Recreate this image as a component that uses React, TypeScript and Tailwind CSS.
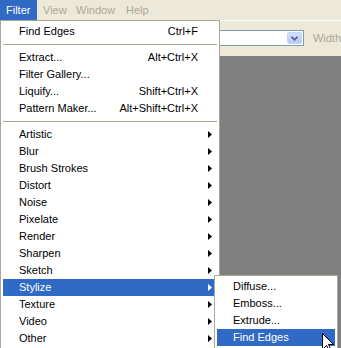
import React from "react";

type Item =
  | { kind: "item"; label: string; shortcut?: string; sub?: boolean; active?: boolean }
  | { kind: "sep" };

const mainItems: Item[] = [
  { kind: "item", label: "Find Edges", shortcut: "Ctrl+F" },
  { kind: "sep" },
  { kind: "item", label: "Extract...", shortcut: "Alt+Ctrl+X" },
  { kind: "item", label: "Filter Gallery..." },
  { kind: "item", label: "Liquify...", shortcut: "Shift+Ctrl+X" },
  { kind: "item", label: "Pattern Maker...", shortcut: "Alt+Shift+Ctrl+X" },
  { kind: "sep" },
  { kind: "item", label: "Artistic", sub: true },
  { kind: "item", label: "Blur", sub: true },
  { kind: "item", label: "Brush Strokes", sub: true },
  { kind: "item", label: "Distort", sub: true },
  { kind: "item", label: "Noise", sub: true },
  { kind: "item", label: "Pixelate", sub: true },
  { kind: "item", label: "Render", sub: true },
  { kind: "item", label: "Sharpen", sub: true },
  { kind: "item", label: "Sketch", sub: true },
  { kind: "item", label: "Stylize", sub: true, active: true },
  { kind: "item", label: "Texture", sub: true },
  { kind: "item", label: "Video", sub: true },
  { kind: "item", label: "Other", sub: true },
];

const subItems = [
  { label: "Diffuse..." },
  { label: "Emboss..." },
  { label: "Extrude..." },
  { label: "Find Edges", active: true },
];

function Arrow({ white }: { white?: boolean }) {
  return (
    <svg width="4" height="7" viewBox="0 0 4 7" className="block">
      <polygon points="0,0 4,3.5 0,7" fill={white ? "#ffffff" : "#000000"} />
    </svg>
  );
}

export default function App() {
  return (
    <div
      className="relative w-[341px] h-[348px] overflow-hidden bg-[#808080] text-[11px] leading-none"
      style={{ fontFamily: '"Liberation Sans", Arial, sans-serif' }}
    >
      {/* Menu bar */}
      <div className="flex h-[20px] bg-[#ece9d8] text-[#aca899]">
        <div className="flex w-[37px] items-center bg-[#316ac5] pl-[6px] text-white">Filter</div>
        <div className="flex w-[33px] items-center pl-[6px]">View</div>
        <div className="flex w-[50px] items-center pl-[6px]">Window</div>
        <div className="flex items-center pl-[6px]">Help</div>
      </div>
      <div className="h-px bg-white" />
      {/* Options toolbar */}
      <div className="flex h-[35px] items-start bg-[#ece9d8] pl-[150px] pt-[9px]">
        <div className="flex h-[16px] w-[156px] items-center justify-end border border-[#7f9db9] bg-white pr-px">
          <div className="flex h-[12px] w-[15px] items-center justify-center rounded-[2px] border border-[#c3d3fd] bg-gradient-to-b from-[#d4e1fd] to-[#b3c8f5]">
            <svg width="7" height="5" viewBox="0 0 7 5">
              <polyline points="0.5,0.8 3.5,3.8 6.5,0.8" fill="none" stroke="#4d6185" strokeWidth="1.8" />
            </svg>
          </div>
        </div>
        <div className="ml-[9px] flex h-[16px] items-center text-[#aca899]">Width</div>
      </div>

      {/* Filter menu */}
      <div className="absolute left-0 top-[20px] w-[220px] border border-[#aca899] bg-white p-[2px] text-black">
        {mainItems.map((it, i) =>
          it.kind === "sep" ? (
            <div key={i} className="flex h-[9px] items-center">
              <div className="h-px w-full bg-[#aca899]" />
            </div>
          ) : (
            <div
              key={i}
              className={`flex h-[17px] items-center pl-[16px] ${it.active ? "bg-[#316ac5] text-white" : ""}`}
            >
              <span className="flex-1 whitespace-nowrap">{it.label}</span>
              {it.shortcut && <span className="pr-[19px] whitespace-nowrap">{it.shortcut}</span>}
              {it.sub && (
                <span className="pr-[5px]">
                  <Arrow white={it.active} />
                </span>
              )}
            </div>
          )
        )}
      </div>

      {/* Stylize submenu */}
      <div className="absolute left-[214px] top-[275px] w-[124px] border border-[#aca899] bg-white p-[2px] text-black">
        {subItems.map((it, i) => (
          <div
            key={i}
            className={`flex h-[17px] items-center pl-[16px] whitespace-nowrap ${it.active ? "bg-[#316ac5] text-white" : ""}`}
          >
            {it.label}
          </div>
        ))}
      </div>

      {/* Mouse cursor */}
      <svg className="absolute left-[322px] top-[333px]" width="13" height="20" viewBox="0 0 13 20">
        <path
          d="M0.5 0.5 L0.5 16.5 L4.5 12.5 L7.5 18.5 L9.5 17.5 L6.5 11.5 L11.5 11.5 Z"
          fill="#ffffff"
          stroke="#000000"
          strokeWidth="1"
          strokeLinejoin="miter"
        />
      </svg>
    </div>
  );
}
